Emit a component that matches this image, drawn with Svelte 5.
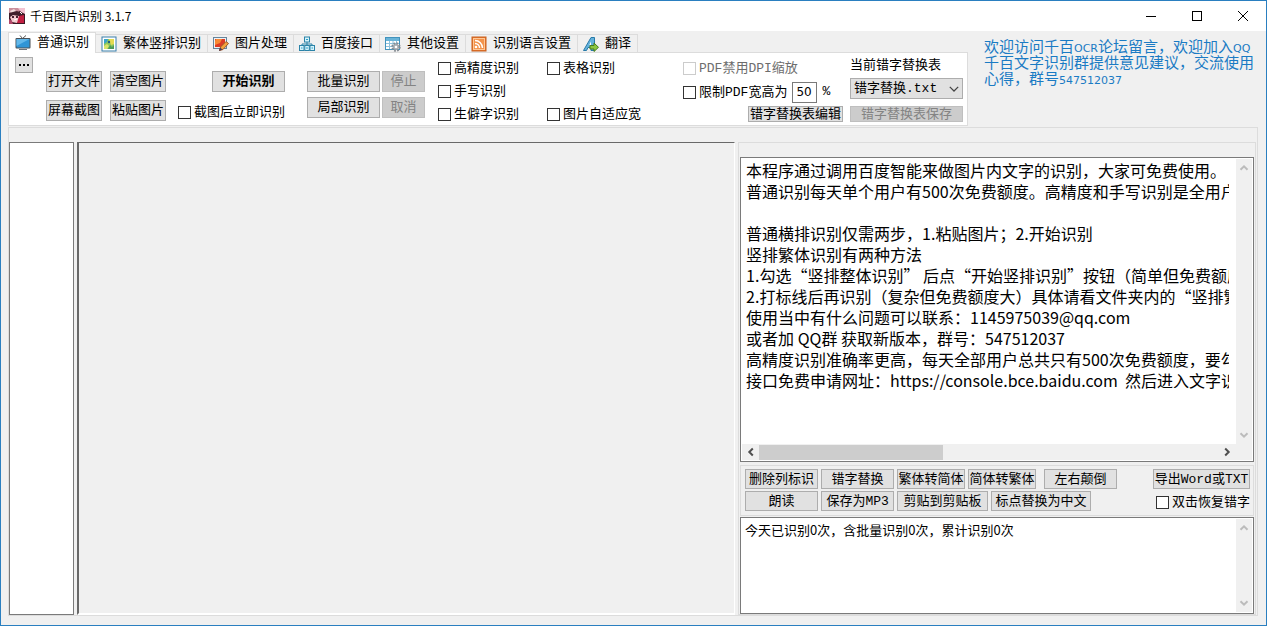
<script>
  const tabs = [
    { id: 'normal', label: '普通识别' },
    { id: 'vertical', label: '繁体竖排识别' },
    { id: 'image', label: '图片处理' },
    { id: 'api', label: '百度接口' },
    { id: 'other', label: '其他设置' },
    { id: 'lang', label: '识别语言设置' },
    { id: 'translate', label: '翻译' },
  ];
  let activeTab = $state('normal');

  let resultText = $state(
    [
      '本程序通过调用百度智能来做图片内文字的识别，大家可免费使用。',
      '普通识别每天单个用户有500次免费额度。高精度和手写识别是全用户共享额度',
      '',
      '普通横排识别仅需两步，1.粘贴图片；2.开始识别',
      '竖排繁体识别有两种方法',
      '1.勾选“竖排整体识别” 后点“开始竖排识别”按钮（简单但免费额度小）',
      '2.打标线后再识别（复杂但免费额度大）具体请看文件夹内的“竖排繁体识别”说明',
      '使用当中有什么问题可以联系：1145975039@qq.com',
      '或者加 QQ群 获取新版本，群号：547512037',
      '高精度识别准确率更高，每天全部用户总共只有500次免费额度，要勾选后使用',
      '接口免费申请网址：https://console.bce.baidu.com  然后进入文字识别',
    ].join('\n')
  );
  let logText = $state('今天已识别0次，含批量识别0次，累计识别0次');
  let pdfPercent = $state('50');
</script>

{#snippet check(label, disabled = false)}
  <label class="check" class:off={disabled}>
    <input type="checkbox" {disabled} />
    <span>{label}</span>
  </label>
{/snippet}

{#snippet chevron(dir)}
  <svg class="chevron {dir}" viewBox="0 0 10 10" aria-hidden="true">
    <path d="M1.5 6.8 5 3.3 8.5 6.8" fill="none" stroke="currentColor" stroke-width="2" />
  </svg>
{/snippet}

{#snippet tabIcon(id)}
  <svg class="tab-icon" viewBox="0 0 16 16" aria-hidden="true">
    {#if id === 'normal'}
      <path d="M5 0.5 7.5 3.5 11 0.5" fill="none" stroke="#555" />
      <rect x="0.5" y="3" width="15" height="10.5" rx="1" fill="#4b5157" />
      <rect x="1.5" y="4" width="13" height="8.5" fill="#2f95d6" />
      <path d="M1.5 4h13L1.5 11z" fill="#62b8ea" />
      <path d="M4 14.5h8" stroke="#70757a" />
    {:else if id === 'vertical'}
      <rect x="1" y="1" width="14" height="14" fill="#fff" stroke="#397eaa" />
      <rect x="3" y="3" width="10" height="10" fill="#8fc75c" />
      <path d="M3 3h4L6 6 3 8z" fill="#38a5ca" />
      <path d="M8 3h5v5l-3 1z" fill="#e5da51" />
      <path d="M3 10l3-2 2 2-2 3H3z" fill="#d9e36a" />
      <path d="M7 13 9 9l2 2 2-2v4z" fill="#4f9a5a" />
      <circle cx="8" cy="6" r="1.2" fill="#235e84" />
    {:else if id === 'image'}
      <rect x="0.5" y="1.5" width="13" height="11" fill="#eef1f3" stroke="#66849b" />
      <rect x="2" y="3" width="10" height="8" fill="#df3b24" />
      <path d="M3 3h6l-2 4-5 2V5z" fill="#f78a34" />
      <path d="M6.5 14.5 7.5 11 13 5.5l2.5 2L10 13.5z" fill="#f3a23b" stroke="#9c552c" />
      <path d="m6 15 1-3.5 2.5 2z" fill="#4b3b54" />
    {:else if id === 'api'}
      <path d="M8 6v3M3 10V8h10v2" fill="none" stroke="#2b83a8" />
      <rect x="5.5" y="1" width="5" height="5" fill="#d7f3fb" stroke="#2b83a8" />
      <rect x="0.5" y="9.5" width="4.5" height="5" fill="#d7f3fb" stroke="#2b83a8" />
      <rect x="5.8" y="9.5" width="4.5" height="5" fill="#d7f3fb" stroke="#2b83a8" />
      <rect x="11" y="9.5" width="4.5" height="5" fill="#d7f3fb" stroke="#2b83a8" />
      <path d="M7 3.5h2M2 12h1.5M7 12h2M12.5 12h1.5" stroke="#28a0c9" />
    {:else if id === 'other'}
      <rect x="0.5" y="1.5" width="14" height="12" fill="#fff" stroke="#4293bd" />
      <path d="M1 2h13v3H1z" fill="#69b4d8" />
      <path d="M1 7.5h13M1 10.5h13M4.5 5v8M8 5v8M11.5 5v8" stroke="#8fc2dc" />
      <circle cx="11" cy="11" r="3" fill="#a8adb2" />
      <circle cx="11" cy="11" r="3.7" fill="none" stroke="#858b92" stroke-width="2" stroke-dasharray="1.7 1.2" />
      <circle cx="11" cy="11" r="1.3" fill="#fff" />
    {:else if id === 'lang'}
      <rect x="1" y="1" width="14" height="14" fill="#e9792c" stroke="#c65f1f" />
      <rect x="2.5" y="2.5" width="11" height="11" fill="#f3934b" stroke="#ffc795" />
      <circle cx="5" cy="11" r="1.3" fill="#fff" />
      <path d="M4 7.5a4.5 4.5 0 0 1 4.5 4.5M4 4.5a7.5 7.5 0 0 1 7.5 7.5" fill="none" stroke="#fff" stroke-width="1.5" />
    {:else}
      <path d="M0.5 14.5 8 1.5h3.5v13H8v-3H5l-1.5 3z" fill="#64b2dc" stroke="#277aa8" />
      <path d="M6.3 9H8V5.5z" fill="#fff" />
      <path d="M7 9.5h4V7l4.5 4.3L11 15.5V13H7z" fill="#8cc63f" stroke="#477d1c" />
    {/if}
  </svg>
{/snippet}

<div class="window">
  <header class="titlebar">
    <svg class="app-icon" viewBox="0 0 16 16" aria-hidden="true">
      <rect width="16" height="16" fill="#3b1723" />
      <path d="M0 0h11v3L4 6 0 7z" fill="#c98f9c" />
      <path d="M1 3 5 1l2 2-5 2z" fill="#f1dcdd" />
      <path d="M9 0h7v6l-4-2z" fill="#f3c3d2" />
      <path d="M0 5 8 3l6 3v2L4 7 0 9z" fill="#41202c" />
      <path d="M1 9 4 7l6 1 1 4-3 3-5-1z" fill="#f4ccd0" />
      <path d="M3 8h2v2H3zM7 8h2v2H7z" fill="#472333" />
      <path d="M10 8l5-1v8H8z" fill="#c21f42" />
      <path d="m0 11 3 2 1 3H0z" fill="#b0486a" />
      <path d="m11 4 2 2M5 12l3-1" fill="none" stroke="#fff" />
    </svg>
    <h1>千百图片识别 3.1.7</h1>
    <div class="window-buttons">
      <button aria-label="最小化">
        <svg viewBox="0 0 12 12"><path d="M1 6.5h10" stroke="#000" /></svg>
      </button>
      <button aria-label="最大化">
        <svg viewBox="0 0 12 12"><rect x="1.5" y="1.5" width="9" height="9" fill="none" stroke="#000" /></svg>
      </button>
      <button aria-label="关闭">
        <svg viewBox="0 0 12 12"><path d="m1 1 10 10M11 1 1 11" stroke="#000" /></svg>
      </button>
    </div>
  </header>

  <div class="top">
    <div class="ribbon">
      <div class="tabs" role="tablist">
        {#each tabs as tab (tab.id)}
          <button
            class="tab"
            class:active={activeTab === tab.id}
            role="tab"
            aria-selected={activeTab === tab.id}
            onclick={() => (activeTab = tab.id)}
          >
            {@render tabIcon(tab.id)}
            <span>{tab.label}</span>
          </button>
        {/each}
      </div>

      <div class="panel">
        <button class="btn more" aria-label="更多">
          <svg viewBox="0 0 12 4"><path d="M1 1h2v2H1zM5 1h2v2H5zM9 1h2v2H9z" /></svg>
        </button>

        <div class="stack files">
          <button class="btn">打开文件</button>
          <button class="btn">屏幕截图</button>
        </div>
        <div class="stack clips">
          <button class="btn">清空图片</button>
          <button class="btn">粘贴图片</button>
        </div>
        <div class="stack start">
          <button class="btn primary">开始识别</button>
          {@render check('截图后立即识别')}
        </div>
        <div class="stack tight batch">
          <button class="btn">批量识别</button>
          <button class="btn">局部识别</button>
        </div>
        <div class="stack tight stop">
          <button class="btn" disabled>停止</button>
          <button class="btn" disabled>取消</button>
        </div>

        <div class="options modes">
          {@render check('高精度识别')}
          {@render check('手写识别')}
          {@render check('生僻字识别')}
        </div>
        <div class="options extras">
          {@render check('表格识别')}
          {@render check('图片自适应宽')}
        </div>
        <div class="options pdf">
          {@render check('PDF禁用DPI缩放', true)}
          <div class="limit">
            {@render check('限制PDF宽高为')}
            <input class="percent" type="text" aria-label="PDF宽高百分比" bind:value={pdfPercent} />
            <span>%</span>
          </div>
          <button class="btn short">错字替换表编辑</button>
        </div>
        <div class="options table">
          <label for="replace-table">当前错字替换表</label>
          <div class="select">
            <select id="replace-table">
              <option>错字替换.txt</option>
            </select>
            {@render chevron('down')}
          </div>
          <button class="btn short" disabled>错字替换表保存</button>
        </div>
      </div>
    </div>

    <p class="notice">
      欢迎访问千百<span>OCR</span>论坛留言，欢迎加入<span>QQ</span>千百文字识别群提供意见建议，交流使用心得，群号<span>547512037</span>
    </p>
  </div>

  <main class="work">
    <div class="thumbs"></div>
    <div class="canvas"></div>

    <section class="side">
      <div class="editor">
        <textarea wrap="off" spellcheck="false" aria-label="识别结果" bind:value={resultText}></textarea>
        <div class="vbar">
          {@render chevron('up')}
          {@render chevron('down')}
        </div>
        <div class="hbar">
          {@render chevron('left')}
          <div class="track"><div class="thumb"></div></div>
          {@render chevron('right')}
        </div>
      </div>

      <div class="actions">
        <div class="row">
          <button class="btn w73">删除列标识</button>
          <button class="btn w73">错字替换</button>
          <button class="btn w68">繁体转简体</button>
          <button class="btn w68">简体转繁体</button>
          <button class="btn w73 apart">左右颠倒</button>
          <button class="btn export">导出Word或TXT</button>
        </div>
        <div class="row">
          <button class="btn w73">朗读</button>
          <button class="btn w73">保存为MP3</button>
          <button class="btn w91">剪贴到剪贴板</button>
          <button class="btn w100">标点替换为中文</button>
          <div class="restore">{@render check('双击恢复错字')}</div>
        </div>
      </div>

      <div class="log">
        <textarea spellcheck="false" aria-label="识别统计" bind:value={logText}></textarea>
        <div class="vbar">
          {@render chevron('up')}
          {@render chevron('down')}
        </div>
      </div>
    </section>
  </main>
</div>

<style>
  :global(body) {
    margin: 0;
    background: #f0f0f0;
  }

  * {
    box-sizing: border-box;
  }

  .window {
    height: 100vh;
    display: flex;
    flex-direction: column;
    border: 1px solid #2a7fc0;
    background: #f0f0f0;
    color: #000;
    font-family: 'Liberation Mono', 'Noto Sans CJK SC', monospace;
    font-size: 13px;
    line-height: 16px;
    overflow: hidden;
  }

  button,
  input,
  select,
  textarea {
    margin: 0;
    font: inherit;
    color: inherit;
    border-radius: 0;
  }

  /* Title bar */
  .titlebar {
    flex: none;
    display: flex;
    align-items: center;
    height: 30px;
    padding-left: 8px;
    background: #fff;
  }

  .app-icon {
    width: 16px;
    height: 16px;
  }

  h1 {
    margin: 0 0 0 5px;
    font: 400 12px/16px 'Noto Sans CJK SC', sans-serif;
  }

  .window-buttons {
    display: flex;
    margin-left: auto;
  }

  .window-buttons button {
    width: 46px;
    height: 30px;
    padding: 0;
    border: none;
    background: none;
  }

  .window-buttons svg {
    display: block;
    width: 12px;
    height: 12px;
    margin: auto;
  }

  /* Ribbon */
  .top {
    flex: none;
    display: flex;
    padding: 1px 12px 1px 7px;
  }

  .ribbon {
    flex: none;
  }

  .tabs {
    display: flex;
    align-items: flex-end;
    height: 20px;
  }

  .tab {
    display: flex;
    align-items: center;
    gap: 6px;
    height: 18px;
    padding: 0 6px 0 5px;
    border: 1px solid #dcdcdc;
    border-width: 1px 1px 0 0;
    background: #f0f0f0;
    white-space: nowrap;
  }

  .tab.active {
    height: 21px;
    margin-bottom: -1px;
    padding: 0 6px;
    border-left-width: 1px;
    background: #fff;
    z-index: 1;
  }

  .tab-icon {
    flex: none;
    width: 16px;
    height: 16px;
  }

  .panel {
    display: flex;
    align-items: flex-start;
    padding: 4px 4px 1px 6px;
    border: 1px solid #dcdcdc;
    background: #fff;
  }

  .btn {
    height: 21px;
    padding: 0;
    border: 1px solid #adadad;
    background: #e1e1e1;
    line-height: 18px;
    text-align: center;
    white-space: nowrap;
  }

  .btn:disabled {
    border-color: #bfbfbf;
    background: #ccc;
    color: #838383;
  }

  .more {
    width: 18px;
    height: 16px;
    line-height: 0;
  }

  .more svg {
    width: 12px;
    height: 4px;
  }

  .stack {
    display: flex;
    flex-direction: column;
    gap: 8px;
    margin-top: 14px;
  }

  .stack.tight {
    gap: 5px;
  }

  .files {
    width: 56px;
    margin-left: 13px;
  }

  .clips {
    width: 56px;
    margin-left: 8px;
  }

  .start {
    width: 107px;
    margin-left: 12px;
    gap: 11px;
  }

  .primary {
    width: 73px;
    align-self: flex-end;
    font-weight: bold;
  }

  .batch {
    width: 73px;
    margin-left: 22px;
  }

  .stop {
    width: 43px;
    margin-left: 2px;
  }

  .check {
    display: flex;
    align-items: center;
    gap: 3px;
    white-space: nowrap;
  }

  .check span {
    padding-top: 2px;
  }

  .check input {
    appearance: none;
    flex: none;
    width: 13px;
    height: 13px;
    border: 1px solid #333;
    background: #fff;
  }

  .check input:checked {
    background: #333;
    box-shadow: inset 0 0 0 2px #fff;
  }

  .check.off {
    color: #6d6d6d;
  }

  .check.off input {
    border-color: #ccc;
  }

  .options {
    display: flex;
    flex-direction: column;
    justify-content: space-between;
    height: 64px;
    margin-top: 1px;
  }

  .options > .check {
    height: 20px;
  }

  .modes,
  .extras {
    height: 66px;
    margin-left: 13px;
  }

  .modes {
    width: 96px;
  }

  .extras {
    width: 120px;
  }

  .pdf {
    width: 160px;
    margin-left: 16px;
  }

  .limit {
    display: flex;
    align-items: center;
    gap: 5px;
  }

  .percent {
    width: 25px;
    height: 21px;
    padding: 0 3px;
    border: 1px solid #7a7a7a;
    background: #fff;
    font: 12px/16px 'DejaVu Sans', sans-serif;
  }

  .pdf .short {
    align-self: flex-end;
    width: 95px;
  }

  .short {
    flex: none;
    height: 16px;
    line-height: 13px;
  }

  .table {
    width: 113px;
    margin-left: 7px;
    justify-content: flex-start;
    gap: 4px;
  }

  .table .short {
    margin-top: auto;
  }

  .select {
    position: relative;
  }

  select {
    display: block;
    appearance: none;
    width: 100%;
    height: 21px;
    padding: 0 3px;
    border: 1px solid #adadad;
    background: #e1e1e1;
  }

  .select .chevron {
    position: absolute;
    right: 3px;
    top: 5px;
    width: 12px;
    height: 12px;
    color: #444;
    pointer-events: none;
  }

  .select .chevron path {
    stroke-width: 1;
  }

  .notice {
    flex: 1;
    margin: 6px 0 0 16px;
    color: #1a7bc4;
    font: 15px/16px 'Noto Sans CJK SC', sans-serif;
  }

  .notice span {
    font: 11px/1px 'DejaVu Sans', sans-serif;
  }

  /* Work area */
  .work {
    flex: 1;
    min-height: 0;
    display: flex;
    margin: 0 8px 9px 7px;
    padding-top: 14px;
    border: 1px solid #dcdcdc;
  }

  .thumbs {
    flex: none;
    width: 65px;
    border: 1px solid #7a7a7a;
    background: #fff;
  }

  .canvas {
    flex: 1;
    margin-left: 3px;
    border: 2px solid #fff;
    border-top-color: #696969;
    border-left-color: #696969;
    border-width: 1px 1px 2px 2px;
  }

  .side {
    flex: none;
    display: flex;
    flex-direction: column;
    width: 41.5%;
    margin: 0 1px 0 3px;
    padding: 14px 1px 0;
    border: 1px solid #dcdcdc;
  }

  .editor,
  .log {
    display: grid;
    grid-template-columns: 1fr 16px;
    border: 1px solid #7a7a7a;
    background: #fff;
    padding: 1px;
  }

  .editor {
    flex: 1;
    min-height: 0;
    grid-template-rows: 1fr 16px;
  }

  textarea {
    display: block;
    min-width: 0;
    padding: 0;
    border: none;
    outline: none;
    resize: none;
    overflow: hidden;
    background: transparent;
  }

  .editor textarea {
    margin: 1px 7px 0 4px;
    font: 16px/21px 'Noto Sans CJK SC', sans-serif;
  }

  .log textarea {
    margin: 3px 7px 0 3px;
    font: 13px/16px 'Noto Sans CJK SC', sans-serif;
  }

  .vbar,
  .hbar {
    display: flex;
    align-items: center;
    justify-content: space-between;
    background: #f0f0f0;
  }

  .vbar {
    flex-direction: column;
    padding: 4px 0;
    color: #bcbcbc;
  }

  .hbar {
    grid-column: 1 / -1;
    padding: 0 20px 0 4px;
    color: #505050;
  }

  .track {
    flex: 1;
    height: 15px;
    margin: 0 4px 0 3px;
  }

  .thumb {
    width: 40%;
    height: 100%;
    background: #cdcdcd;
  }

  .chevron {
    flex: none;
    width: 10px;
    height: 10px;
  }

  .chevron.down {
    transform: rotate(180deg);
  }

  .chevron.left {
    transform: rotate(-90deg);
  }

  .chevron.right {
    transform: rotate(90deg);
  }

  .actions {
    flex: none;
    display: flex;
    flex-direction: column;
    gap: 2px;
    margin: 3px 0 1px;
    padding: 3px 3px 4px 4px;
    border: 1px solid #dcdcdc;
  }

  .row {
    display: flex;
    align-items: center;
    gap: 3px;
    height: 20px;
  }

  .row .btn {
    height: 20px;
    line-height: 17px;
  }

  .w68 {
    width: 68px;
  }

  .w73 {
    width: 73px;
  }

  .w91 {
    width: 91px;
  }

  .w100 {
    width: 100px;
  }

  .apart {
    margin-left: 5px;
  }

  .export {
    width: 97px;
    margin-left: auto;
  }

  .restore {
    align-self: flex-end;
    margin-left: auto;
  }

  .log {
    flex: none;
    height: 97px;
  }
</style>
